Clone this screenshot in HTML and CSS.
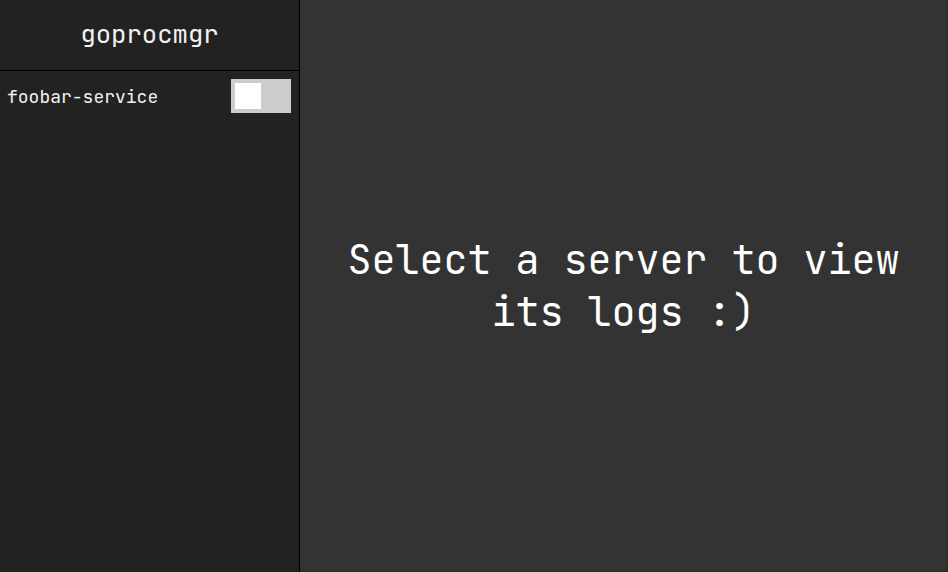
FILE: index.html
```html
<!DOCTYPE html>
<html>
<head>
<meta charset="utf-8">
<link rel="stylesheet" href="styles.css">
</head>
<body>
<div class="app">
  <aside class="sidebar">
    <header class="brand">goprocmgr</header>
    <ul class="servers">
      <li class="server">
        <span class="server-name">foobar-service</span>
        <span class="toggle"><span class="knob"></span></span>
      </li>
    </ul>
  </aside>
  <main class="main">
    <p class="placeholder">Select a server to view its logs :)</p>
  </main>
</div>
</body>
</html>
```
FILE: styles.css
```css
* { box-sizing: border-box; }
html, body { margin: 0; padding: 0; height: 100%; }
body {
  background: #222;
  font-family: "JetBrains Mono", "DejaVu Sans Mono", "Liberation Mono", monospace;
  color: #fff;
}
.app {
  display: flex;
  height: 572px;
}
.sidebar {
  width: 300px;
  background: #222;
  border-right: 1px solid #000;
  display: flex;
  flex-direction: column;
}
.brand {
  height: 71px;
  border-bottom: 1px solid #000;
  display: flex;
  align-items: center;
  justify-content: center;
  font-size: 25.6px;
  padding-bottom: 2px;
  color: #f2f2f2;
}
.servers {
  list-style: none;
  margin: 0;
  padding: 0;
}
.server {
  display: flex;
  justify-content: space-between;
  padding: 8px 8px 0 7px;
  height: 50px;
  align-items: flex-start;
}
.server-name {
  font-size: 18px;
  margin-top: 6px;
  color: #f2f2f2;
}
.toggle {
  width: 60px;
  height: 34px;
  background: #ccc;
  padding: 4px;
  display: flex;
}
.knob {
  width: 26px;
  height: 26px;
  background: #fff;
}
.main {
  flex: 1;
  background: #333;
  display: flex;
  align-items: center;
  justify-content: center;
  border-right: 1px solid #2a2a2a;
  border-bottom: 1px solid #2a2a2a;
}
.placeholder {
  margin: 0;
  width: 580px;
  text-align: center;
  font-size: 40px;
  line-height: 52px;
  color: #fff;
}
```
